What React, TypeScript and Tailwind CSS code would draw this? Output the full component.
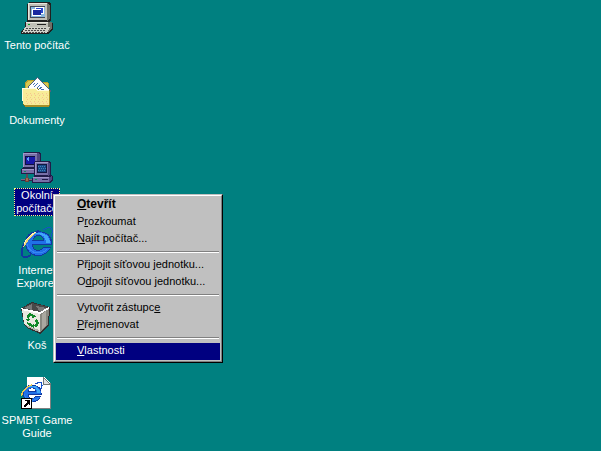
import type { ReactNode } from "react";

function Icon({ children }: { children: ReactNode }) {
  return (
    <svg viewBox="0 0 32 32" className="size-8 shrink-0" shapeRendering="crispEdges" aria-hidden="true">
      {children}
    </svg>
  );
}

function ComputerIcon() {
  return (
    <Icon>
      <path d="M8 0H28L30 2V18L27 21H7L6 19V2Z" fill="#202020" />
      <path d="M7 1H26V18H7Z" fill="#c0c0b8" />
      <path d="M7 1H26V2H8V18H7Z" fill="#e8e8e0" />
      <path d="M26 1L29 3V17L26 19Z" fill="#707068" />
      <path d="M9 4H24V16H9Z" fill="#404858" />
      <path d="M10 5H24V15H10Z" fill="#88b8e0" />
      <path d="M14 5H23V12H14Z" fill="#fff" />
      <path d="M15 6H22V11H15Z" fill="#2848d0" />
      <path d="M11 7H20V14H11Z" fill="#fff" />
      <path d="M12 8H20V13H12Z" fill="#1828a0" />
      <path d="M4 20H28L32 21V28L27 32H0V29L4 26Z" fill="#202020" />
      <path d="M5 20H27V25H5Z" fill="#c0c0b8" />
      <path d="M5 20H27V21H5Z" fill="#e8e8e0" />
      <path d="M27 20H31V26L27 30Z" fill="#707068" />
      <path d="M7 22H9V23H7Z" fill="#00a020" />
      <path d="M16 22H25V23H16Z" fill="#202020" />
      <path d="M4 25H29L26 31H1Z" fill="#d0d0c8" />
      <path d="M5 26H26M4 28H25M2 30H24" stroke="#484848" strokeDasharray="2 1" fill="none" />
    </Icon>
  );
}

function DocumentsIcon() {
  return (
    <Icon>
      <path d="M4 6L6 3H12L14 5H26L28 7V27H4Z" fill="#b8a030" />
      <path d="M5 6L7 4H12L14 6H27V12H5Z" fill="#d8c850" />
      <path d="M6 10L16 0L31 14L22 22Z" fill="#506080" />
      <path d="M7 10L16 1L30 14L22 20Z" fill="#fff" />
      <path d="M12 8L14 6M13 10L17 6M15 12L19 8M18 12L21 10M20 13L23 12" stroke="#4870b8" fill="none" />
      <path d="M1 11H16L18 13H29V29L27 30H4L2 27Z" fill="#807018" />
      <path d="M1 11H15L17 13H28V28H3L2 26Z" fill="#f8ec98" />
      <path d="M1 11H15L17 13H28V14H16L14 12H2V24H1Z" fill="#fffce0" />
      <path d="M5 16H27M6 18H27M5 20H27M6 22H27M5 24H27M6 26H27" stroke="#f4c888" strokeDasharray="1 3" fill="none" />
      <path d="M7 17H27M8 21H27M7 25H27" stroke="#f8d8a0" strokeDasharray="1 2" fill="none" />
      <path d="M28 14H29V28H4V30H28Z" fill="#a89028" />
    </Icon>
  );
}

function NetworkIcon() {
  return (
    <Icon>
      <path d="M2 1L4 0H18L20 2V15L17 17V22H0V17L2 15Z" fill="#201c48" />
      <path d="M2 1H16V15H2Z" fill="#7870a8" />
      <path d="M2 1H16V2H3V15H2Z" fill="#a098c8" />
      <path d="M16 1L19 2V14L16 16Z" fill="#504880" />
      <path d="M4 4H14V13H4Z" fill="#101040" />
      <path d="M5 5H14V12H5Z" fill="#1818a8" />
      <path d="M6 6H8V8H6ZM7 5H8V9H7Z" fill="#60a0f0" />
      <path d="M1 17H16V21H1Z" fill="#7870a8" />
      <path d="M1 17H16V18H1Z" fill="#a098c8" />
      <path d="M3 19H5V20H3Z" fill="#109060" />
      <path d="M0 27H12V29H0Z" fill="#302848" />
      <path d="M0 27H12V28H0Z" fill="#806888" />
      <path d="M5 22H7V26H5Z" fill="#604858" />
      <path d="M4 26H8V30H4Z" fill="#684038" />
      <path d="M5 26H7V29H5Z" fill="#987050" />
      <path d="M13 10L15 9H28L30 11V23L32 24V29L29 31H11V26L13 24Z" fill="#201c48" />
      <path d="M14 10H27V23H14Z" fill="#7870a8" />
      <path d="M14 10H27V11H15V23H14Z" fill="#a098c8" />
      <path d="M27 10L29 12V22L27 24Z" fill="#504880" />
      <path d="M16 12H26V21H16Z" fill="#101840" />
      <path d="M17 13H25V20H17Z" fill="#184888" />
      <path d="M17 14H25M18 16H25M17 18H25" stroke="#3888b8" strokeDasharray="1 1" fill="none" />
      <path d="M12 25H28V30H12Z" fill="#7870a8" />
      <path d="M12 25H28V26H12Z" fill="#a098c8" />
      <path d="M28 25L31 24V28L28 30Z" fill="#504880" />
      <path d="M14 27H16V28H14Z" fill="#109060" />
      <path d="M21 27H27V28H21Z" fill="#201c48" />
    </Icon>
  );
}

function ExplorerMark() {
  return (
    <>
      <path d="M17 4C8 4 4 10 4 16C4 24 10 29 17 29C24 29 28 25 30 20H22C21 22 19 23 17 23C14 23 12 21 12 18H31C32 9 26 4 17 4ZM12 13C13 10 15 9 17 9C20 9 22 10 22 13Z" fill="#1038a0" />
      <path d="M17 5C9 5 5 10 5 16C5 23 10 28 17 28C23 28 27 25 29 21H22C21 23 19 24 17 24C13 24 11 21 11 17H30C30 9 25 5 17 5ZM11 14C12 10 14 8 17 8C21 8 23 10 23 14Z" fill="#2070e8" />
      <path d="M13 7C16 5 22 5 25 8C28 10 29 13 29 16H25C25 10 21 7 16 7Z" fill="#40a8f8" />
      <path d="M6 17C7 22 11 26 17 26C21 26 24 25 26 22" fill="none" stroke="#3888f0" />
    </>
  );
}

function InternetIcon() {
  return (
    <Icon>
      <ExplorerMark />
      <path d="M22 3C26 0 31 -1 31 3C32 5 31 7 30 10" fill="none" stroke="#1850c8" strokeWidth="1" />
      <path d="M18 4C10 6 2 15 1 24C0 31 4 32 10 28" fill="none" stroke="#1038a0" strokeWidth="2" />
      <path d="M17 4C11 6 4 12 2 20L4 19C7 13 11 8 17 4Z" fill="#f0d870" />
      <path d="M15 5C9 8 5 12 3 17" fill="none" stroke="#fff4b8" />
    </Icon>
  );
}

function BinIcon() {
  return (
    <Icon>
      <path d="M0 6L11 0L29 5L28 23L19 32L6 26L3 23Z" fill="#303030" />
      <path d="M1 6L11 1L28 5L19 11Z" fill="#484848" />
      <path d="M3 6L11 2V8ZM15 4L26 6L19 10Z" fill="#787878" />
      <path d="M1 7L19 11V30L6 25L3 22Z" fill="#e8e8e0" />
      <path d="M19 11L28 6L27 22L19 30Z" fill="#888880" />
      <path d="M21 12L25 9V23L21 27Z" fill="#aaa8a0" />
      <path d="M0 6L19 10L28 5V7L19 12L1 8Z" fill="#fff" />
      <path d="M5 23L18 28V30L6 25Z" fill="#b0b0a8" />
      <path d="M6 16V13L9 11L13 13L12 15L9 14L8 17ZM13 12L15 15L11 16ZM4 17H9L7 20ZM6 20L11 22V25L7 23ZM16 17L18 21L16 25L12 24L15 22L14 18ZM13 21V27L10 24Z" fill="#108828" />
    </Icon>
  );
}

function GuideIcon() {
  return (
    <Icon>
      <path d="M6 0H23L30 7V32H6Z" fill="#808080" />
      <path d="M6 0H23L29 6V31H6Z" fill="#fff" />
      <path d="M22 0L30 8H22Z" fill="#707878" />
      <path d="M23 2L28 7H23Z" fill="#e0e0e0" />
      <g transform="translate(-1 5) scale(.7)">
        <ExplorerMark />
        <path d="M22 3C26 0 31 -1 31 3C32 5 31 7 30 10" fill="none" stroke="#1850c8" strokeWidth="2" />
        <path d="M17 4C10 6 3 13 2 20" fill="none" stroke="#e8c850" strokeWidth="2" />
      </g>
      <path d="M0 21H11V32H0Z" fill="#000" />
      <path d="M1 22H10V31H1Z" fill="#fff" />
      <path d="M4 23H9V28H8V27H7L5 29V30H3V28L6 25V24H4Z" fill="#000" />
    </Icon>
  );
}

type Shortcut = { label: string; icon: ReactNode; selected?: boolean };

const shortcuts: Shortcut[] = [
  { label: "Tento počítač", icon: <ComputerIcon /> },
  { label: "Dokumenty", icon: <DocumentsIcon /> },
  { label: "Okolní počítače", icon: <NetworkIcon />, selected: true },
  { label: "Internet Explorer", icon: <InternetIcon /> },
  { label: "Koš", icon: <BinIcon /> },
  { label: "SPMBT\u00a0Game Guide", icon: <GuideIcon /> },
];

type Entry = { before: string; key: string; after: string; bold?: boolean; active?: boolean };

const groups: Entry[][] = [
  [
    { before: "", key: "O", after: "tevřít", bold: true },
    { before: "P", key: "r", after: "ozkoumat" },
    { before: "", key: "N", after: "ajít počítač..." },
  ],
  [
    { before: "Př", key: "i", after: "pojit síťovou jednotku..." },
    { before: "O", key: "d", after: "pojit síťovou jednotku..." },
  ],
  [
    { before: "Vytvořit zástupc", key: "e", after: "" },
    { before: "", key: "P", after: "řejmenovat" },
  ],
  [{ before: "", key: "V", after: "lastnosti", active: true }],
];

function ContextMenu() {
  return (
    <div
      role="menu"
      className="absolute left-[53px] top-[194px] w-[170px] border border-t-[#c0c0c0] border-l-[#c0c0c0] border-r-black border-b-black"
    >
      <div className="border border-t-white border-l-white border-r-[#808080] border-b-[#808080] bg-[#c0c0c0] p-px">
        {groups.map((entries, index) => (
          <div key={index} role="group">
            {index > 0 && (
              <div role="separator" className="mx-px mt-[3px] mb-1 h-[2px] border-t border-b border-t-[#808080] border-b-white" />
            )}
            {entries.map((entry) => (
              <button
                key={entry.key + entry.after}
                type="button"
                role="menuitem"
                className={`block h-[17px] w-full pb-[2px] pl-[21px] text-left leading-[15px] whitespace-nowrap ${
                  entry.bold ? "text-[12px] font-bold" : "text-[11px]"
                } ${entry.active ? "bg-[#000080] text-white" : "text-black"}`}
              >
                {entry.before}
                <span className="underline underline-offset-1">{entry.key}</span>
                {entry.after}
              </button>
            ))}
          </div>
        ))}
      </div>
    </div>
  );
}

export default function App() {
  return (
    <main className="relative min-h-screen overflow-hidden bg-[#008080] font-['Liberation_Sans',Arial,sans-serif] text-[11px] leading-[13px] text-white">
      <div className="flex h-screen flex-col items-start pt-[2px]">
        {shortcuts.map(({ label, icon, selected }) => (
          <button
            key={label}
            type="button"
            className="flex h-[75px] w-[74px] shrink-0 flex-col items-center gap-1"
          >
            {icon}
            <span
              className={`text-center ${
                selected ? "w-min border border-dotted border-[#ffff7f] bg-[#000080] px-px" : "py-px"
              }`}
            >
              {label}
            </span>
          </button>
        ))}
      </div>
      <ContextMenu />
    </main>
  );
}
